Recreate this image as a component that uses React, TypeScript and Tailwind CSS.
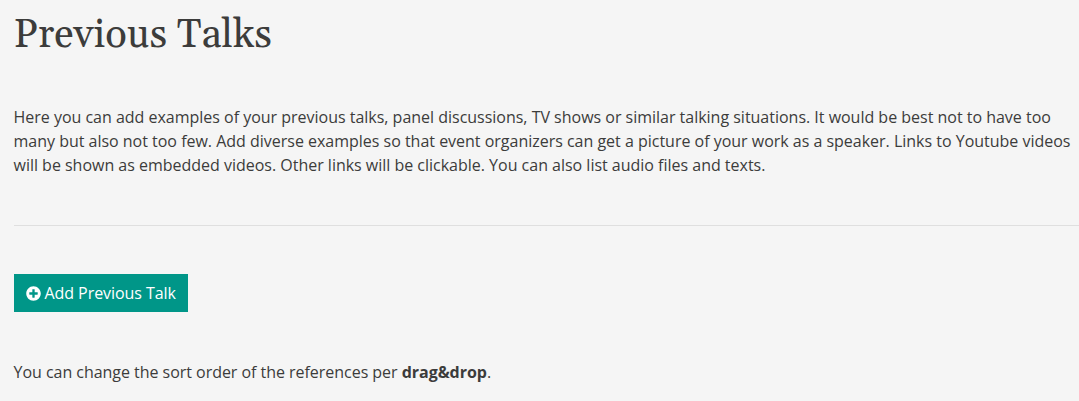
import { FaPlusCircle } from "react-icons/fa";

export default function App() {
  return (
    <main className="h-[401px] overflow-hidden bg-[#f5f5f5] pl-[14px] font-['Open_Sans',sans-serif] text-[16px] leading-6 text-[#3c3c3b]">
      <h1 className="-ml-[0.5px] pt-3 font-['Georgia','Gelasio','Liberation_Serif',serif] text-[40px] leading-[48px]">
        Previous Talks
      </h1>
      <p className="mt-[45px] -ml-[0.5px] tracking-[-0.012px] whitespace-nowrap">
        Here you can add examples of your previous talks, panel discussions, TV shows or similar talking situations. It would be best not to have too
        <br />
        many but also not too few. Add diverse examples so that event organizers can get a picture of your work as a speaker. Links to Youtube videos
        <br />
        will be shown as embedded videos. Other links will be clickable. You can also list audio files and texts.
      </p>
      <hr className="mt-12 border-[#dfdfdf]" />
      <button className="mt-12 flex h-[38px] w-[174px] items-center gap-[3.5px] bg-[#009688] pl-3 tracking-[-0.06px] whitespace-nowrap text-white">
        <FaPlusCircle className="size-[15px]" />
        Add Previous Talk
      </button>
      <p className="mt-12 -ml-[0.5px] tracking-[-0.034px]">
        You can change the sort order of the references per <strong>drag&amp;drop</strong>.
      </p>
    </main>
  );
}
